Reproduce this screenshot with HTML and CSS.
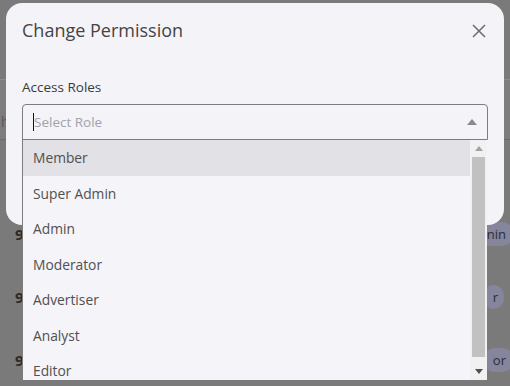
FILE: index.html
```html
<!DOCTYPE html>
<html>
<head>
<meta charset="utf-8">
<link rel="stylesheet" href="styles.css">
</head>
<body>
<div class="page">
  <div class="page-head"></div>
  <div class="page-bar"><span class="bar-text">h</span></div>
  <div class="page-rows">
    <div class="row"><span class="num">9</span><span class="badge">nin</span></div>
    <div class="row"><span class="num">9</span><span class="badge short">r</span></div>
    <div class="row"><span class="num">9</span><span class="badge">or</span></div>
  </div>
</div>

<div class="modal">
  <div class="modal-head">
    <h2 class="modal-title">Change Permission</h2>
    <svg class="close" width="14" height="14" viewBox="0 0 14 14"><path d="M1 1 L13 13 M13 1 L1 13" stroke="#6b6b6b" stroke-width="1.5" fill="none"/></svg>
  </div>
  <div class="field">
    <div class="label">Access Roles</div>
    <div class="select">
      <span class="cursor"></span>
      <span class="placeholder">Select Role</span>
      <svg class="arrow" width="10" height="6" viewBox="0 0 10 6"><path d="M0 6 L5 0 L10 6 Z" fill="#8a8a8a"/></svg>
    </div>
  </div>
</div>

<div class="dropdown">
  <div class="options">
    <div class="option active">Member</div>
    <div class="option">Super Admin</div>
    <div class="option">Admin</div>
    <div class="option">Moderator</div>
    <div class="option">Advertiser</div>
    <div class="option">Analyst</div>
    <div class="option">Editor</div>
  </div>
  <div class="scrollbar">
    <div class="sb-btn"><svg width="8" height="5" viewBox="0 0 8 5"><path d="M0 5 L4 0 L8 5 Z" fill="#a3a3a3"/></svg></div>
    <div class="sb-thumb"></div>
    <div class="sb-btn"><svg width="8" height="5" viewBox="0 0 8 5"><path d="M0 0 L4 5 L8 0 Z" fill="#505050"/></svg></div>
  </div>
</div>
</body>
</html>
```
FILE: styles.css
```css
* { box-sizing: border-box; }
html, body { margin: 0; padding: 0; }
body {
  width: 510px;
  height: 386px;
  overflow: hidden;
  background: #7a7a7a;
  font-family: "Open Sans", "Noto Sans", sans-serif;
  position: relative;
}
.page {
  display: flex;
  flex-direction: column;
  height: 386px;
}
.page-head {
  height: 80px;
  border-bottom: 1px solid #8c8c8c;
}
.page-bar {
  border-bottom: 1px solid #6c6c6c;
  background: #7d7d7d;
  height: 60px;
  padding-top: 30px;
  padding-left: 1px;
}
.bar-text {
  font-size: 14px;
  color: #5a5a5a;
}
.page-rows {
  display: flex;
  flex-direction: column;
  padding-top: 82px;
  gap: 39px;
}
.row {
  display: flex;
  justify-content: space-between;
  align-items: center;
  height: 24px;
  padding-left: 15px;
}
.num {
  font-size: 15px;
  font-weight: 700;
  color: #2a2a2a;
}
.badge {
  background: #85859c;
  color: #2c2c3c;
  font-size: 13px;
  border-radius: 12px;
  padding: 3px 8px 3px 10px;
  margin-right: -4px;
}
.badge.short {
  margin-right: 6px;
  padding: 3px 6px 3px 10px;
}
.modal {
  position: absolute;
  left: 6px;
  top: 3px;
  width: 498px;
  height: 222px;
  background: #f4f3f8;
  border-radius: 16px;
  padding: 17px 16px 0 16px;
}
.modal-head {
  display: flex;
  justify-content: space-between;
  align-items: center;
  height: 20px;
}
.modal-title {
  margin: 0;
  font-size: 18px;
  font-weight: 500;
  color: #444;
  line-height: 20px;
}
.close {
  margin-right: 2px;
  margin-top: 2px;
}
.field {
  margin-top: 39px;
}
.label {
  font-size: 13.5px;
  color: #3a3a3a;
  line-height: 16px;
  font-weight: 500;
}
.select {
  margin-top: 9px;
  height: 36px;
  border: 1px solid #7d7d7d;
  border-radius: 4px 4px 0 0;
  display: flex;
  align-items: center;
  padding-left: 10px;
  padding-right: 10px;
  position: relative;
}
.cursor {
  width: 1px;
  height: 18px;
  background: #111;
}
.placeholder {
  font-size: 13.5px;
  color: #a2a2aa;
  flex: 1;
}
.dropdown {
  position: absolute;
  left: 22px;
  top: 139px;
  width: 465px;
  height: 241px;
  background: #f5f4f8;
  border-left: 1px solid #7d7d7d;
  border-top: 1px solid #7d7d7d;
  display: flex;
  overflow: hidden;
}
.options {
  flex: 1;
  display: flex;
  flex-direction: column;
}
.option {
  flex: none;
  height: 35.5px;
  line-height: 36px;
  padding-left: 10px;
  font-size: 13.8px;
  color: #505050;
}
.option.active {
  background: #e2e1e6;
}
.scrollbar {
  width: 17px;
  background: #f1f1f1;
  display: flex;
  flex-direction: column;
  align-items: center;
}
.sb-btn {
  height: 17px;
  width: 17px;
  display: flex;
  align-items: center;
  justify-content: center;
}
.sb-thumb {
  width: 13px;
  flex: 1;
  background: #c1c1c1;
  margin-bottom: 6px;
}
```
